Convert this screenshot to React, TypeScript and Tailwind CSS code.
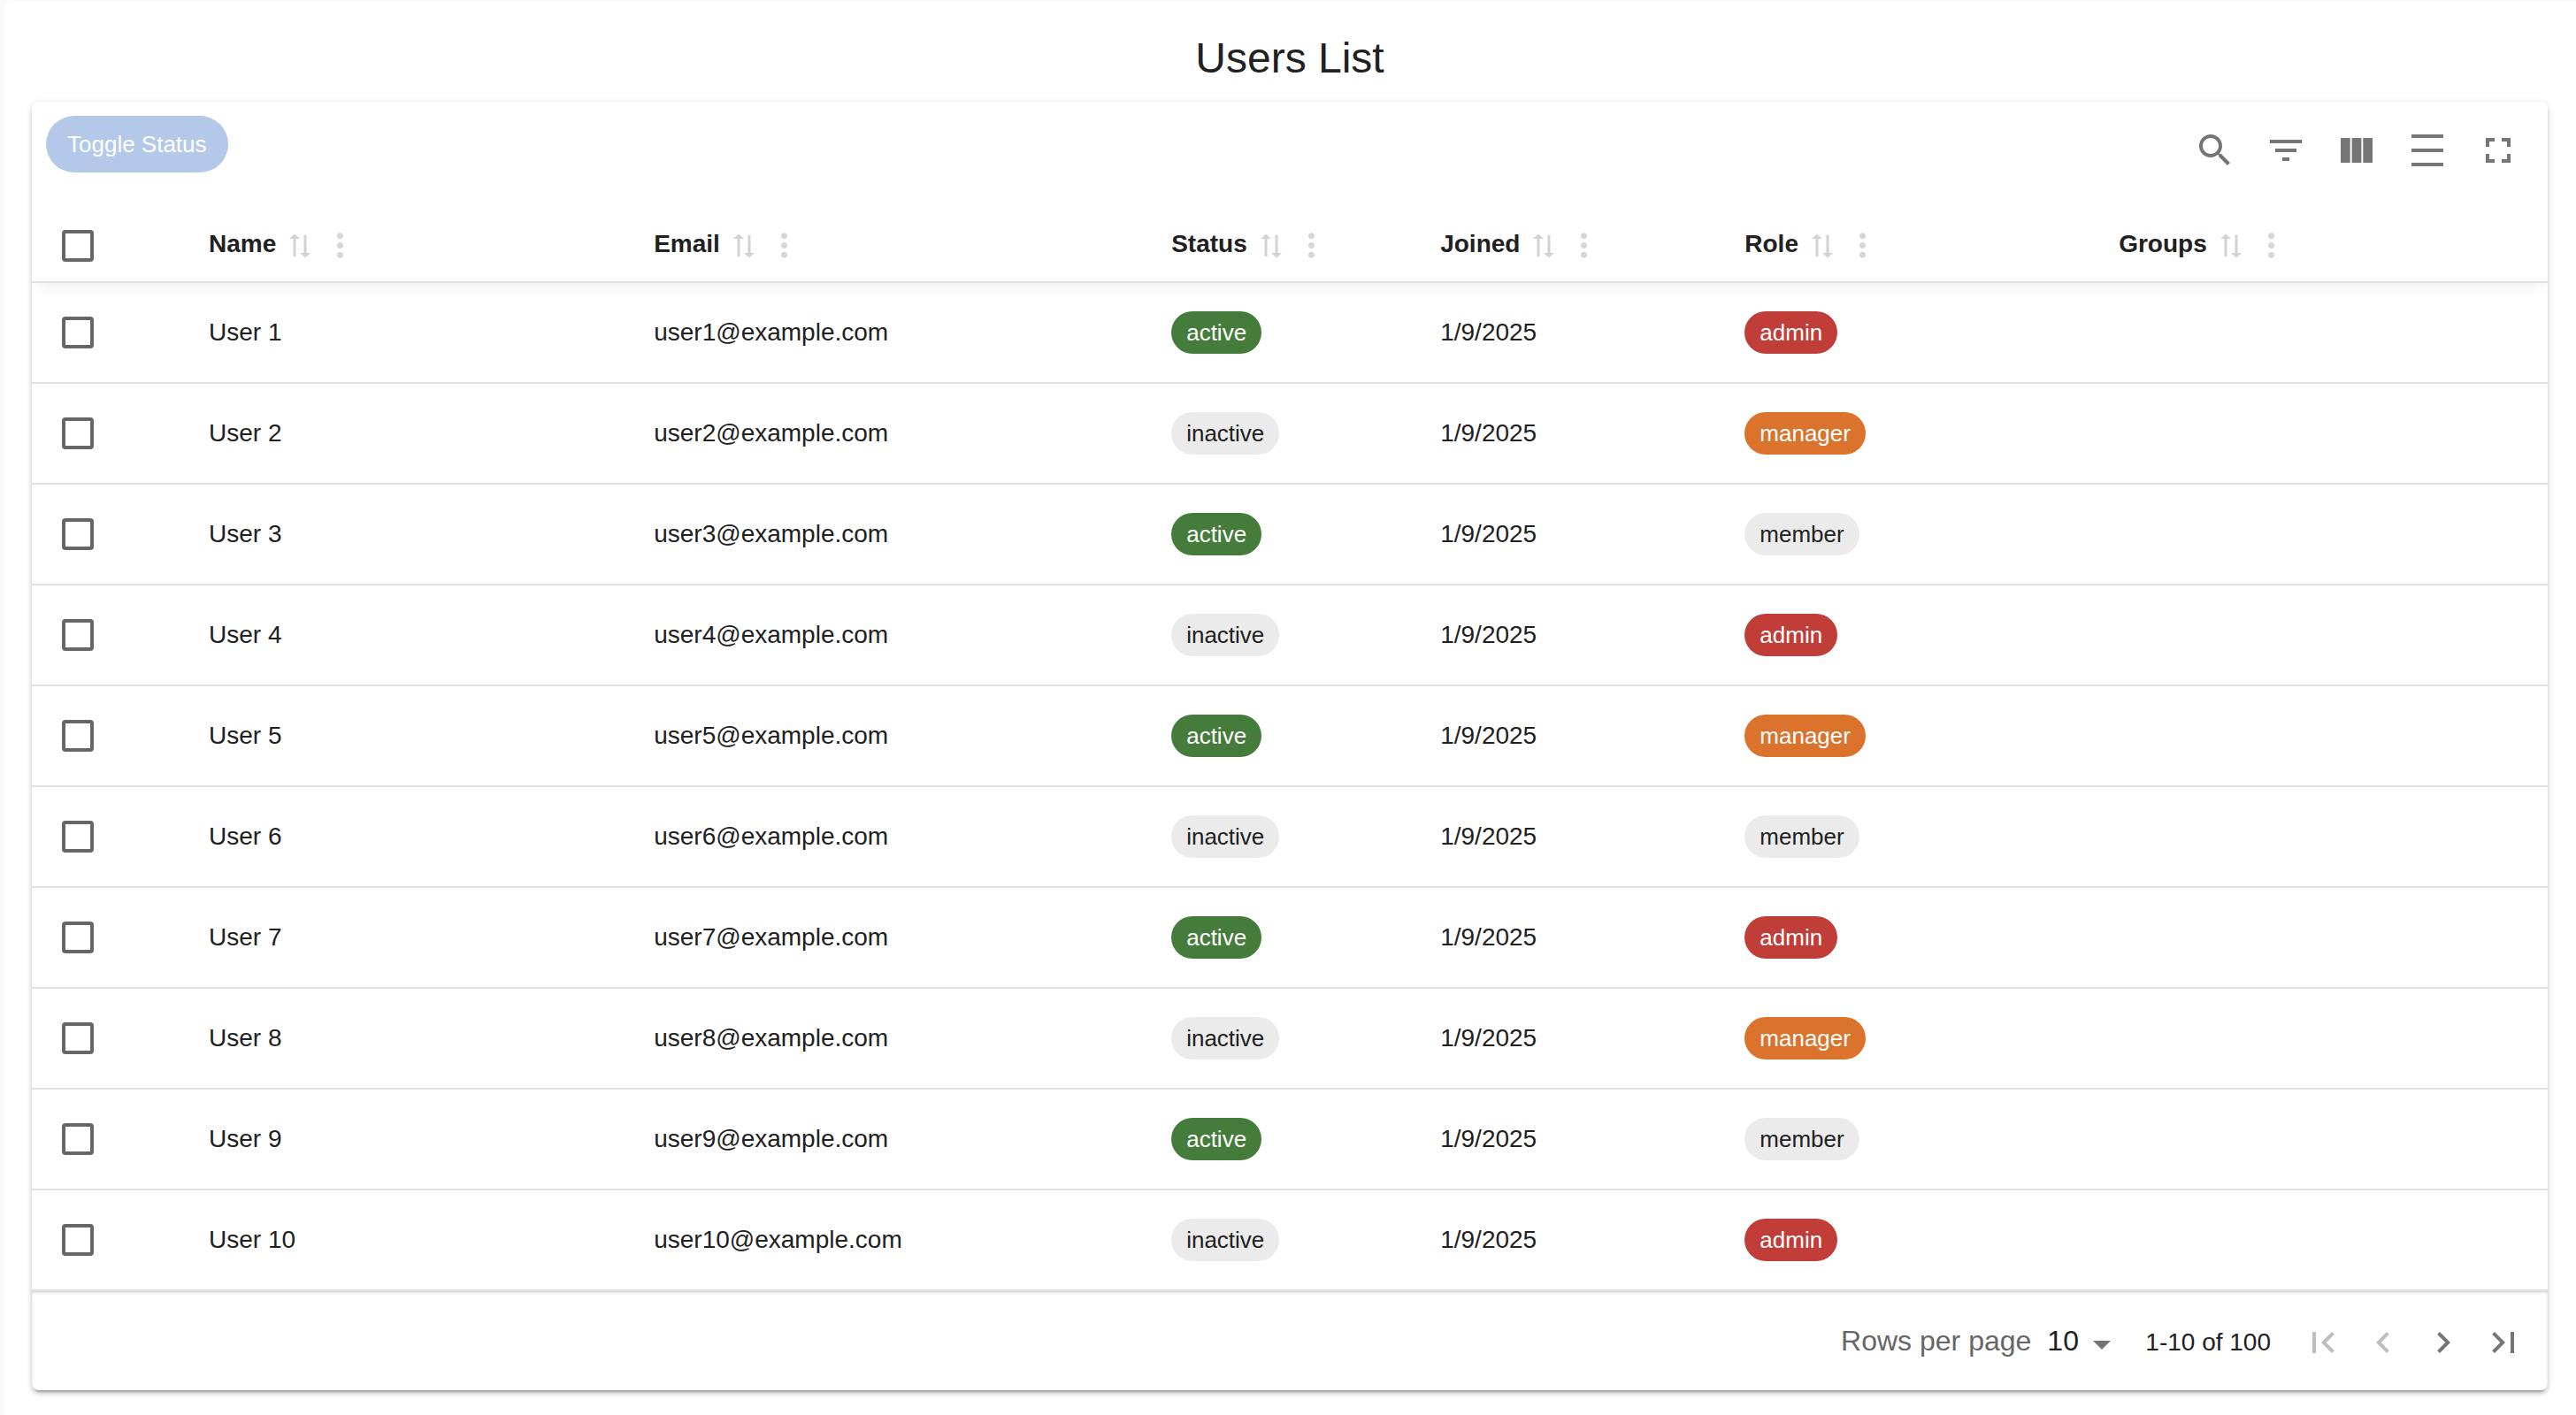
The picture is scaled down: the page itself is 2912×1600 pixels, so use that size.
import { useState } from "react";

type Status = "active" | "inactive";
type Role = "admin" | "manager" | "member";

const roles: Role[] = ["admin", "manager", "member"];

const users = Array.from({ length: 10 }, (_, i) => ({
  id: i + 1,
  name: `User ${i + 1}`,
  email: `user${i + 1}@example.com`,
  status: (i % 2 === 0 ? "active" : "inactive") as Status,
  joined: "1/9/2025",
  role: roles[i % 3],
}));

const chipStyles: Record<Status | Role, string> = {
  active: "bg-[#457b3b] text-white",
  inactive: "bg-[#ebebeb] text-[#212121]",
  admin: "bg-[#c13d37] text-white",
  manager: "bg-[#db732d] text-white",
  member: "bg-[#ebebeb] text-[#212121]",
};

const columns = [
  { label: "Name", width: "w-[17.69%]" },
  { label: "Email", width: "w-[20.57%]" },
  { label: "Status", width: "w-[10.69%]" },
  { label: "Joined", width: "w-[12.1%]" },
  { label: "Role", width: "w-[14.87%]" },
  { label: "Groups", width: "w-[18.17%]" },
];

const tools = [
  {
    label: "Show/Hide search",
    d: "M15.5 14h-.79l-.28-.27C15.41 12.59 16 11.11 16 9.5 16 5.91 13.09 3 9.5 3S3 5.91 3 9.5 5.91 16 9.5 16c1.61 0 3.09-.59 4.23-1.57l.27.28v.79l5 4.99L20.49 19l-4.99-5zm-6 0C7.01 14 5 11.99 5 9.5S7.01 5 9.5 5 14 7.01 14 9.5 11.99 14 9.5 14z",
  },
  { label: "Show/Hide filters", d: "M10 18h4v-2h-4v2zM3 6v2h18V6H3zm3 7h12v-2H6v2z" },
  {
    label: "Show/Hide columns",
    d: "M14.67 5v14H9.33V5h5.34zm1 14H21V5h-5.33v14zm-7.34 0V5H3v14h5.33z",
  },
  { label: "Toggle density", d: "M3 3h18v2H3zm0 16h18v2H3zm0-8h18v2H3z" },
  {
    label: "Toggle full screen",
    d: "M7 14H5v5h5v-2H7v-3zm-2-4h2V7h3V5H5v5zm12 7h-3v2h5v-5h-2v3zM14 5v2h3v3h2V5h-5z",
  },
];

const pageButtons = [
  {
    label: "Go to first page",
    disabled: true,
    d: "M18.41 16.59 13.82 12l4.59-4.59L17 6l-6 6 6 6zM6 6h2v12H6z",
  },
  {
    label: "Go to previous page",
    disabled: true,
    d: "M15.41 7.41 14 6l-6 6 6 6 1.41-1.41L10.83 12z",
  },
  {
    label: "Go to next page",
    disabled: false,
    d: "M10 6 8.59 7.41 13.17 12l-4.58 4.59L10 18l6-6z",
  },
  {
    label: "Go to last page",
    disabled: false,
    d: "M5.59 7.41 10.18 12l-4.59 4.59L7 18l6-6-6-6zM16 6h2v12h-2z",
  },
];

function Icon({ d, className }: { d: string; className: string }) {
  return (
    <svg viewBox="0 0 24 24" className={className} fill="currentColor" aria-hidden="true">
      <path d={d} />
    </svg>
  );
}

function Checkbox({ label }: { label: string }) {
  return (
    <input
      type="checkbox"
      aria-label={label}
      className="block size-9 appearance-none rounded-[4px] border-4 border-[#666666] checked:bg-[#1976d2]"
    />
  );
}

function Chip({ value }: { value: Status | Role }) {
  return (
    <span
      className={`inline-flex h-12 items-center rounded-full px-[17px] align-middle text-[26px] leading-9 ${chipStyles[value]}`}
    >
      {value}
    </span>
  );
}

function HeaderCell({ label, width }: { label: string; width: string }) {
  return (
    <th scope="col" className={`border-b-2 border-[#e0e0e0] pt-[10px] pl-8 text-left ${width}`}>
      <div className="flex items-center">
        <span className="pb-1 text-[28px] leading-10 font-bold">{label}</span>
        <button type="button" aria-label={`Sort by ${label}`} className="ml-[9px] text-[#d3d3d3]">
          <svg viewBox="0 0 24 24" className="block size-9" fill="currentColor" aria-hidden="true">
            <path
              transform="rotate(-90 12 12) translate(1.2 0) scale(.9 1)"
              d="m22 8-4-4v3H3v2h15v3l4-4zM2 16l4 4v-3h15v-2H6v-3l-4 4z"
            />
          </svg>
        </button>
        <button type="button" aria-label={`${label} column actions`} className="ml-[6px] text-[#d6d6d6]">
          <Icon
            className="block size-[43px]"
            d="M12 8c1.1 0 2-.9 2-2s-.9-2-2-2-2 .9-2 2 .9 2 2 2zm0 2c-1.1 0-2 .9-2 2s.9 2 2 2 2-.9 2-2-.9-2-2-2zm0 6c-1.1 0-2 .9-2 2s.9 2 2 2 2-.9 2-2-.9-2-2-2z"
          />
        </button>
      </div>
    </th>
  );
}

export default function App() {
  const [pageSize, setPageSize] = useState("10");
  const cell = "border-b-2 border-[#e0e0e0] pl-8";

  return (
    <div className="flex min-h-screen flex-col bg-[#f9fafc] pt-[2px] pl-1 font-['Liberation_Sans',Arial,sans-serif] text-[#212121]">
      <div className="grow rounded-tl-lg bg-white px-8 pt-8 pb-7">
        <h1 className="mb-[17px] text-center text-[48px] leading-[64px]">Users List</h1>

        <main className="overflow-hidden rounded-lg bg-white shadow-[0_6px_2px_-4px_rgba(0,0,0,0.2),0_4px_4px_0_rgba(0,0,0,0.14),0_2px_10px_0_rgba(0,0,0,0.12)]">
          <div className="flex h-28 items-start justify-between px-4">
            <div className="py-4">
              <button
                type="button"
                disabled
                className="h-16 rounded-full bg-[#b4c9ea] px-6 text-[26px] leading-10 text-white"
              >
                Toggle Status
              </button>
            </div>
            <div className="flex py-[15px] text-[#757575]">
              {tools.map((t) => (
                <button key={t.label} type="button" aria-label={t.label} className="p-4">
                  <Icon d={t.d} className="block size-12" />
                </button>
              ))}
            </div>
          </div>

          <table className="w-full table-fixed border-separate border-spacing-0">
            <thead className="shadow-[0_8px_16px_-6px_rgba(0,0,0,0.08)]">
              <tr className="h-[93px]">
                <th scope="col" className="w-[5.91%] border-b-2 border-[#e0e0e0] pt-[10px] pl-[34px]">
                  <Checkbox label="Select all rows" />
                </th>
                {columns.map((c) => (
                  <HeaderCell key={c.label} label={c.label} width={c.width} />
                ))}
              </tr>
            </thead>
            <tbody>
              {users.map((u) => (
                <tr key={u.id} className="h-[114px] text-[28px] leading-10">
                  <td className="border-b-2 border-[#e0e0e0] pl-[34px]">
                    <Checkbox label={`Select ${u.name}`} />
                  </td>
                  <td className={cell}>{u.name}</td>
                  <td className={cell}>{u.email}</td>
                  <td className={cell}>
                    <Chip value={u.status} />
                  </td>
                  <td className={cell}>{u.joined}</td>
                  <td className={cell}>
                    <Chip value={u.role} />
                  </td>
                  <td className={cell} />
                </tr>
              ))}
            </tbody>
          </table>

          <div className="flex h-28 items-center justify-end px-4 pt-1 shadow-[inset_0_2px_4px_-2px_rgba(97,97,97,0.5)]">
            <div className="flex items-center gap-[18px] pb-1 text-[32px] leading-12">
              <label htmlFor="page-size" className="text-[#666666]">
                Rows per page
              </label>
              <div className="relative">
                <select
                  id="page-size"
                  value={pageSize}
                  onChange={(e) => setPageSize(e.target.value)}
                  className="block h-12 w-[86px] appearance-none bg-transparent"
                >
                  <option>10</option>
                  <option>20</option>
                  <option>50</option>
                </select>
                <Icon
                  d="M7 10l5 5 5-5z"
                  className="pointer-events-none absolute top-1 right-0 size-12 text-[#757575]"
                />
              </div>
            </div>
            <span className="mx-[25px] text-[28px] leading-10">1-10 of 100</span>
            <div className="flex">
              {pageButtons.map((b) => (
                <button
                  key={b.label}
                  type="button"
                  aria-label={b.label}
                  disabled={b.disabled}
                  className="p-[10px] text-[#757575] disabled:text-[#bdbdbd]"
                >
                  <Icon d={b.d} className="block size-12" />
                </button>
              ))}
            </div>
          </div>
        </main>
      </div>
    </div>
  );
}
